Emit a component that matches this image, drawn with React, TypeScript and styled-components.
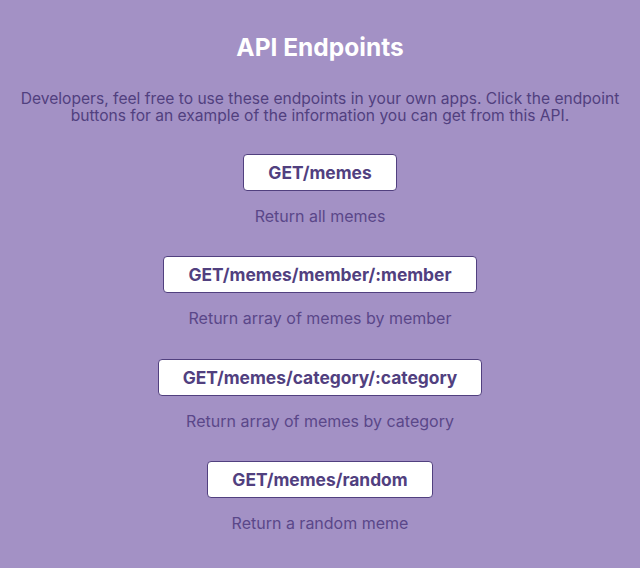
import React from "react";
import styled, { createGlobalStyle } from "styled-components";

const GlobalStyle = createGlobalStyle`
  html, body {
    margin: 0;
    padding: 0;
    background: #a391c5;
  }
  body {
    font-family: Inter, "Noto Sans", "Liberation Sans", sans-serif;
  }
`;

const Page = styled.main`
  width: 640px;
  min-height: 568px;
  box-sizing: border-box;
  padding: 34px 10px 0;
  background: #a391c5;
  display: flex;
  flex-direction: column;
  align-items: center;
  color: #51407f;
`;

const Title = styled.h1`
  margin: 0;
  font-size: 24.5px;
  font-weight: 700;
  line-height: 26px;
  color: #ffffff;
`;

const Intro = styled.p`
  margin: 30px 0 0;
  font-size: 15.6px;
  line-height: 17px;
  text-align: center;
  color: #51407f;
`;

const EndpointList = styled.ul`
  list-style: none;
  margin: 30px 0 0;
  padding: 0;
  display: flex;
  flex-direction: column;
  align-items: center;
  gap: 31.3px;
`;

const Endpoint = styled.li`
  display: flex;
  flex-direction: column;
  align-items: center;
  gap: 16px;
`;

const EndpointButton = styled.button`
  box-sizing: border-box;
  height: 37px;
  padding: 0 24px;
  border: 1px solid #51407f;
  border-radius: 4px;
  background: #ffffff;
  color: #51407f;
  font-family: inherit;
  font-size: 17.4px;
  font-weight: 700;
  cursor: pointer;
`;

const Description = styled.span`
  font-size: 16px;
  line-height: 18px;
  color: #5a4789;
`;

const endpoints = [
  { path: "GET/memes", text: "Return all memes" },
  { path: "GET/memes/member/:member", text: "Return array of memes by member" },
  { path: "GET/memes/category/:category", text: "Return array of memes by category" },
  { path: "GET/memes/random", text: "Return a random meme" },
];

export default function App() {
  return (
    <>
      <GlobalStyle />
      <Page>
        <Title>API Endpoints</Title>
        <Intro>
          Developers, feel free to use these endpoints in your own apps. Click the endpoint
          <br />
          buttons for an example of the information you can get from this API.
        </Intro>
        <EndpointList>
          {endpoints.map((e) => (
            <Endpoint key={e.path}>
              <EndpointButton>{e.path}</EndpointButton>
              <Description>{e.text}</Description>
            </Endpoint>
          ))}
        </EndpointList>
      </Page>
    </>
  );
}
